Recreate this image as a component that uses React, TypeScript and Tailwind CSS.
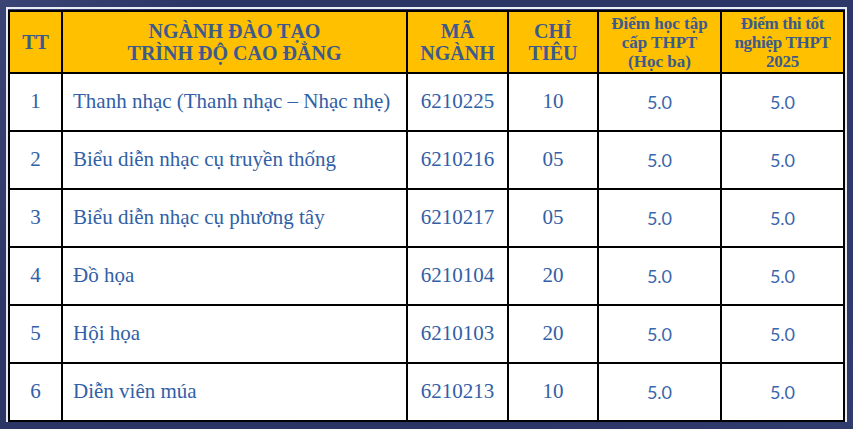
const rows = [
  { tt: "1", name: "Thanh nhạc (Thanh nhạc – Nhạc nhẹ)", code: "6210225", quota: "10" },
  { tt: "2", name: "Biểu diễn nhạc cụ truyền thống", code: "6210216", quota: "05" },
  { tt: "3", name: "Biểu diễn nhạc cụ phương tây", code: "6210217", quota: "05" },
  { tt: "4", name: "Đồ họa", code: "6210104", quota: "20" },
  { tt: "5", name: "Hội họa", code: "6210103", quota: "20" },
  { tt: "6", name: "Diễn viên múa", code: "6210213", quota: "10" },
]

const serif = { fontFamily: '"Liberation Serif", "Times New Roman", serif' }
const sans = { fontFamily: 'Lato, "Liberation Sans", sans-serif' }

export default function App() {
  return (
    <div className="w-[853px] h-[429px] overflow-hidden bg-[linear-gradient(120deg,#3a4576_0%,#2b3566_18%,#2a3465_60%,#313c6e_100%)] pt-[7px] pl-[6px]">
      <div className="w-[841px] border-2 border-[#e8ebf3] border-b-0 pt-[1px]">
        <table className="border-collapse table-fixed w-[837px] bg-white" style={serif}>
          <colgroup>
            <col className="w-[53px]" />
            <col className="w-[345px]" />
            <col className="w-[101px]" />
            <col className="w-[90px]" />
            <col className="w-[123px]" />
            <col className="w-[123px]" />
          </colgroup>
          <thead>
            <tr className="h-[62px] bg-[#ffc000] text-[#3d5a8c] font-bold">
              <th className="border-2 border-black text-[20px] font-bold">TT</th>
              <th className="border-2 border-black text-[20px] leading-[22px] font-bold">
                NGÀNH ĐÀO TẠO
                <br />
                TRÌNH ĐỘ CAO ĐẲNG
              </th>
              <th className="border-2 border-black text-[20px] leading-[22px] font-bold">
                MÃ
                <br />
                NGÀNH
              </th>
              <th className="border-2 border-black text-[20px] leading-[22px] font-bold">
                CHỈ
                <br />
                TIÊU
              </th>
              <th className="border-2 border-black text-[17px] leading-[19px] font-bold whitespace-nowrap">
                Điểm học tập
                <br />
                cấp THPT
                <br />
                (Học ba)
              </th>
              <th className="border-2 border-black text-[17px] leading-[19px] font-bold whitespace-nowrap tracking-[-0.3px]">
                Điểm thi tốt
                <br />
                nghiệp THPT
                <br />
                2025
              </th>
            </tr>
          </thead>
          <tbody className="text-[#3160a6]">
            {rows.map((r) => (
              <tr key={r.tt} className="h-[58px]">
                <td className="border-2 border-black text-center text-[21px]">{r.tt}</td>
                <td className="border-2 border-black text-[21px] pl-[10px] whitespace-nowrap">{r.name}</td>
                <td className="border-2 border-black text-center text-[21px]">{r.code}</td>
                <td className="border-2 border-black text-center text-[21px]">{r.quota}</td>
                <td className="border-2 border-black text-center text-[18px] text-[#3a66ad]" style={sans}>5.0</td>
                <td className="border-2 border-black text-center text-[18px] text-[#3a66ad]" style={sans}>5.0</td>
              </tr>
            ))}
          </tbody>
        </table>
      </div>
    </div>
  )
}
